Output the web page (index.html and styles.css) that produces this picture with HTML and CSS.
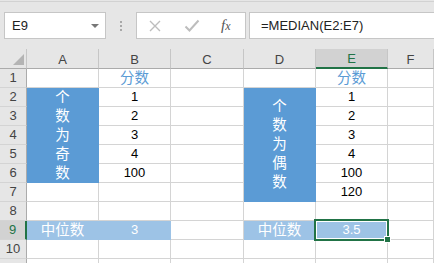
FILE: index.html
```html
<!DOCTYPE html>
<html lang="zh">
<head>
    <meta charset="UTF-8">
    <title>MEDIAN</title>
    <link rel="stylesheet" href="styles.css">
</head>
<body>
    <div class="toolbar">
        <div class="namebox">
            <span>E9</span>
            <span class="caret"></span>
        </div>
        <div class="grip"><i></i><i></i><i></i></div>
        <div class="fbtns">
            <svg width="14" height="14" viewBox="0 0 14 14"><path d="M2 2L12 12M12 2L2 12" stroke="#bdbdbd" stroke-width="1.4" fill="none"/></svg>
            <svg width="16" height="14" viewBox="0 0 16 14"><path d="M1.5 7.5L5.5 11.5L14.5 1.5" stroke="#bdbdbd" stroke-width="2" fill="none"/></svg>
            <span class="fx"><i>f</i><i class="x">x</i></span>
        </div>
        <div class="formula">=MEDIAN(E2:E7)</div>
    </div>

    <div class="sheet">
        <div class="corner"><span class="tri"></span></div>
        <div class="ch">A</div>
        <div class="ch">B</div>
        <div class="ch">C</div>
        <div class="ch">D</div>
        <div class="ch active">E</div>
        <div class="ch">F</div>

        <!-- row 1 -->
        <div class="rh">1</div>
        <div class="c"></div>
        <div class="c zh title">分数</div>
        <div class="c"></div>
        <div class="c"></div>
        <div class="c zh title">分数</div>
        <div class="c"></div>

        <!-- row 2 (merged A2:A6 and D2:D7) -->
        <div class="rh">2</div>
        <div class="c zh merged odd"><span>个</span><span>数</span><span>为</span><span>奇</span><span>数</span></div>
        <div class="c">1</div>
        <div class="c"></div>
        <div class="c zh merged even"><span>个</span><span>数</span><span>为</span><span>偶</span><span>数</span></div>
        <div class="c">1</div>
        <div class="c"></div>

        <div class="rh">3</div>
        <div class="c">2</div>
        <div class="c"></div>
        <div class="c">2</div>
        <div class="c"></div>

        <div class="rh">4</div>
        <div class="c">3</div>
        <div class="c"></div>
        <div class="c">3</div>
        <div class="c"></div>

        <div class="rh">5</div>
        <div class="c">4</div>
        <div class="c"></div>
        <div class="c">4</div>
        <div class="c"></div>

        <div class="rh">6</div>
        <div class="c">100</div>
        <div class="c"></div>
        <div class="c">100</div>
        <div class="c"></div>

        <div class="rh">7</div>
        <div class="c"></div>
        <div class="c"></div>
        <div class="c"></div>
        <div class="c">120</div>
        <div class="c"></div>

        <div class="rh">8</div>
        <div class="c"></div>
        <div class="c"></div>
        <div class="c"></div>
        <div class="c"></div>
        <div class="c"></div>
        <div class="c"></div>

        <!-- row 9 -->
        <div class="rh active">9</div>
        <div class="c zh light">中位数</div>
        <div class="c light">3</div>
        <div class="c"></div>
        <div class="c zh light">中位数</div>
        <div class="c light selected">3.5</div>
        <div class="c"></div>

        <div class="rh">10</div>
        <div class="c"></div>
        <div class="c"></div>
        <div class="c"></div>
        <div class="c"></div>
        <div class="c"></div>
        <div class="c"></div>

        <div class="rh"></div>
        <div class="c"></div>
        <div class="c"></div>
        <div class="c"></div>
        <div class="c"></div>
        <div class="c"></div>
        <div class="c"></div>
    </div>
</body>
</html>
```

FILE: styles.css
```css
body {
    margin: 0;
    width: 434px;
    height: 263px;
    overflow: hidden;
    background: #e6e6e6;
    font-family: "Liberation Sans", "Noto Sans CJK SC", sans-serif;
    font-size: 13px;
    color: #000;
}

/* formula bar */
.toolbar {
    height: 48px;
    box-sizing: border-box;
    border-top: 1px solid #d2d2d2;
    margin-top: 1px;
    padding-top: 10px;
    display: flex;
    align-items: flex-start;
    background: #e6e6e6;
}

.namebox {
    margin-left: 4px;
    width: 102px;
    height: 27px;
    box-sizing: border-box;
    background: #fff;
    border: 1px solid #c6c6c6;
    display: flex;
    align-items: center;
    justify-content: space-between;
    padding: 0 6px 0 7px;
    color: #222;
}

.caret {
    width: 0;
    height: 0;
    border-left: 4px solid transparent;
    border-right: 4px solid transparent;
    border-top: 4px solid #777;
}

.grip {
    width: 30px;
    height: 27px;
    display: flex;
    flex-direction: column;
    align-items: center;
    justify-content: center;
    gap: 2px;
}

.grip i {
    width: 2px;
    height: 2px;
    background: #a8a8a8;
}

.fbtns {
    width: 110px;
    height: 27px;
    box-sizing: border-box;
    background: #fff;
    border: 1px solid #c6c6c6;
    display: flex;
    align-items: center;
    padding-left: 11px;
    gap: 22px;
}

.fx {
    font-family: "Liberation Serif", serif;
    color: #555;
    font-size: 15px;
    margin-left: -1px;
}

.fx .x {
    font-size: 12px;
}

.formula {
    margin-left: 3px;
    flex: 1;
    height: 27px;
    box-sizing: border-box;
    background: #fff;
    border: 1px solid #c6c6c6;
    border-right: none;
    padding-left: 11px;
    line-height: 25px;
    color: #222;
}

/* grid */
.sheet {
    display: grid;
    grid-template-columns: 27px 72px 72px 73px 72px 72px 46px;
    grid-template-rows: 20px repeat(11, 19px);
    background: #fff;
}

.sheet > div {
    box-sizing: border-box;
    display: flex;
    align-items: center;
    justify-content: center;
    line-height: 18px;
}

.corner {
    background: #e6e6e6;
    border-right: 1px solid #c6c6c6;
    border-bottom: 1px solid #ababab;
    position: relative;
}

.tri {
    position: absolute;
    right: 2px;
    bottom: 3px;
    width: 0;
    height: 0;
    border-left: 11px solid transparent;
    border-bottom: 11px solid #b4b4b4;
}

.ch {
    background: #e6e6e6;
    color: #444;
    border-right: 1px solid #c6c6c6;
    border-bottom: 1px solid #ababab;
    padding-top: 2px;
}

.ch.active {
    background: #d2d2d2;
    color: #217346;
    border-bottom: 2px solid #217346;
}

.rh {
    background: #e6e6e6;
    color: #444;
    border-right: 1px solid #ababab;
    border-bottom: 1px solid #d4d4d4;
}

.rh.active {
    background: #d2d2d2;
    color: #217346;
    border-right: 2px solid #217346;
}

.c {
    border-right: 1px solid #d4d4d4;
    border-bottom: 1px solid #d4d4d4;
}

.zh {
    font-size: 14.5px;
}

.title {
    color: #5b9bd5;
}

.merged {
    flex-direction: column;
    background: #5b9bd5;
    border-color: #5b9bd5 !important;
    color: #fff;
}

.merged span {
    line-height: 19px;
}

.odd {
    grid-row: span 5;
}

.even {
    grid-row: span 6;
}

.light {
    background: #9dc3e6;
    border-color: #9dc3e6 !important;
    color: #fff;
}

.selected {
    position: relative;
}

.selected::after {
    content: "";
    position: absolute;
    top: -2px;
    left: -2px;
    right: -2px;
    bottom: -2px;
    border: 2px solid #217346;
    box-shadow: inset 0 0 0 1px #fff;
}

.selected::before {
    content: "";
    position: absolute;
    right: -4px;
    bottom: -4px;
    width: 5px;
    height: 5px;
    background: #217346;
    border: 1px solid #fff;
    z-index: 1;
}
```
